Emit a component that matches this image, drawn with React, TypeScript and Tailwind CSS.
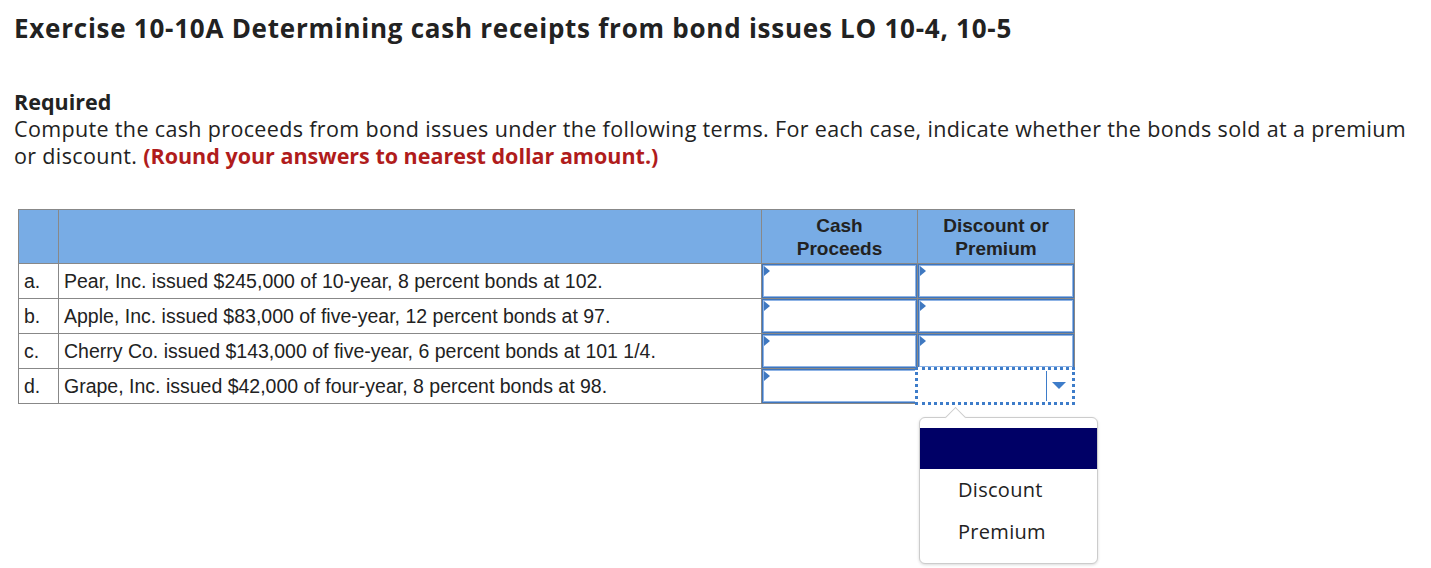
import React from "react";

const rows = [
  { l: "a.", t: "Pear, Inc. issued $245,000 of 10-year, 8 percent bonds at 102." },
  { l: "b.", t: "Apple, Inc. issued $83,000 of five-year, 12 percent bonds at 97." },
  { l: "c.", t: "Cherry Co. issued $143,000 of five-year, 6 percent bonds at 101 1/4." },
  { l: "d.", t: "Grape, Inc. issued $42,000 of four-year, 8 percent bonds at 98." },
];

function InputCell() {
  return (
    <div className="relative h-[34px] w-full border border-[#3f76bd] shadow-[inset_0_0_0_1px_#8fb4e6] bg-white">
      <div className="absolute left-[1px] top-[1px] w-0 h-0 border-t-[5px] border-b-[5px] border-l-[6px] border-t-transparent border-b-transparent border-l-[#3f78c0]" />
    </div>
  );
}

export default function App() {
  return (
    <div className="bg-white w-[1431px] h-[568px] overflow-hidden text-[#222]" style={{ fontFamily: "'Open Sans', 'Noto Sans', sans-serif" }}>
      <div className="pl-[14px] pt-[11px]">
        <h1 className="text-[26px] leading-[34px] font-bold tracking-[0.75px] whitespace-nowrap">
          Exercise 10-10A Determining cash receipts from bond issues LO 10-4, 10-5
        </h1>
        <div className="mt-[43px] text-[21.5px] leading-[27px] tracking-[0.35px]">
          <div className="font-bold tracking-normal">Required</div>
          <div>
            Compute the cash proceeds from bond issues under the following terms. For each case, indicate whether the bonds sold at a premium or discount.{" "}
            <span className="font-bold text-[#b01c1c] tracking-normal">(Round your answers to nearest dollar amount.)</span>
          </div>
        </div>
      </div>
      <div className="ml-[18px] mt-[40px]" style={{ fontFamily: "'Liberation Sans', Arial, sans-serif" }}>
        <table className="border-collapse text-[19.5px] text-[#222]">
          <thead>
            <tr className="bg-[#78ace5] h-[54px]">
              <th className="w-[40px] border border-[#888]"></th>
              <th className="w-[703px] border border-[#888]"></th>
              <th className="w-[156px] border border-[#888] font-bold text-[19px] leading-[23px] text-center align-middle">Cash<br />Proceeds</th>
              <th className="w-[157px] border border-[#888] font-bold text-[19px] leading-[23px] text-center align-middle">Discount or<br />Premium</th>
            </tr>
          </thead>
          <tbody>
            {rows.map((r, i) => (
              <tr key={r.l} className="h-[35px]">
                <td className="border border-[#888] pl-[5px] align-middle leading-[22px]">{r.l}</td>
                <td className="border border-[#888] pl-[5px] align-middle leading-[22px]">{r.t}</td>
                <td className="border border-[#888] p-0 align-middle">
                  <InputCell />
                </td>
                <td className="border border-[#888] p-0 align-middle">
                  {i < 3 ? (
                    <InputCell />
                  ) : (
                    <div className="relative h-[34px]">
                      <div className="absolute left-[-3px] right-[-1px] top-[-2px] bottom-[-2px] border-[3px] border-dotted border-[#3d7cc9] bg-white">
                        <div className="absolute right-[25px] top-[1px] bottom-[1px] w-px bg-[#3d7cc9]" />
                        <div className="absolute right-[6px] top-[12px] w-0 h-0 border-l-[7px] border-r-[7px] border-t-[7px] border-l-transparent border-r-transparent border-t-[#3d7cc9]" />
                      </div>
                      <div className="absolute left-[1px] top-[48px] w-[179px] h-[147px] bg-white border border-[#ccc] rounded-[6px] shadow-[0_1px_3px_rgba(0,0,0,0.15)]" style={{ fontFamily: "'Open Sans', 'Noto Sans', sans-serif" }}>
                        <div className="absolute left-[28px] top-[-8px] w-[15px] h-[15px] bg-white border-l border-t border-[#ccc] rotate-45" />
                        <div className="mt-[10px] h-[41px] bg-[#000066]" />
                        <div className="pl-[38px] text-[20px] tracking-[0.3px] leading-[42px] text-[#222]">
                          <div>Discount</div>
                          <div>Premium</div>
                        </div>
                      </div>
                    </div>
                  )}
                </td>
              </tr>
            ))}
          </tbody>
        </table>
      </div>
    </div>
  );
}
